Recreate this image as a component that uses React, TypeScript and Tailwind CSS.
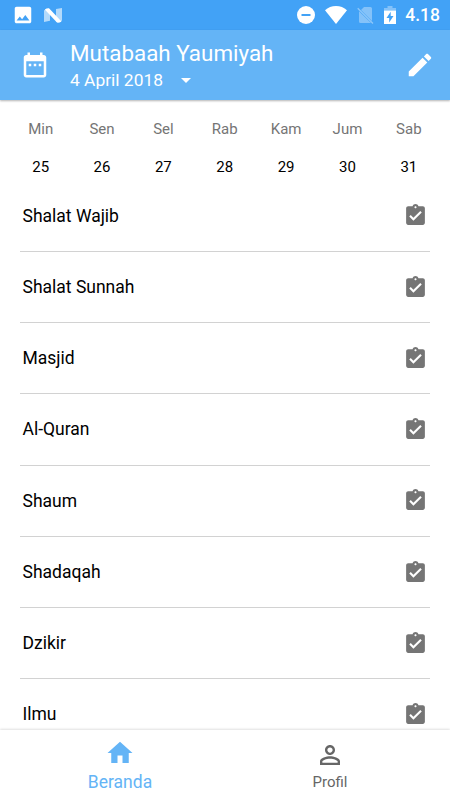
import React from 'react';

/* ─────────────────────────────────────────────
   Icon – 24-unit filled glyph
───────────────────────────────────────────── */
interface IconProps {
  d: string;
  className?: string;
}

const Icon: React.FC<IconProps> = ({ d, className = 'size-[30px]' }) => (
  <svg viewBox="0 0 24 24" fill="currentColor" className={`shrink-0 ${className}`}>
    <path d={d} />
  </svg>
);

const icons = {
  calendar:
    'M9 11H7v2h2v-2zm4 0h-2v2h2v-2zm4 0h-2v2h2v-2zm2-7h-1V2h-2v2H8V2H6v2H5c-1.11 0-1.99.9-1.99 2L3 20c0 1.1.89 2 2 2h14c1.1 0 2-.9 2-2V6c0-1.1-.9-2-2-2zm0 16H5V9h14v11z',
  pencil:
    'M3 17.25V21h3.75L17.81 9.94l-3.75-3.75L3 17.25zM20.71 7.04c.39-.39.39-1.02 0-1.41l-2.34-2.34c-.39-.39-1.02-.39-1.41 0l-1.83 1.83 3.75 3.75 1.83-1.83z',
  task:
    'M19 3h-4.18C14.4 1.84 13.3 1 12 1c-1.3 0-2.4.84-2.82 2H5c-1.1 0-2 .9-2 2v14c0 1.1.9 2 2 2h14c1.1 0 2-.9 2-2V5c0-1.1-.9-2-2-2zm-7 0c.55 0 1 .45 1 1s-.45 1-1 1-1-.45-1-1 .45-1 1-1zm-2 14l-4-4 1.41-1.41L10 14.17l6.59-6.59L18 9l-8 8z',
  home: 'M10 20v-6h4v6h5v-8h3L12 3 2 12h3v8z',
  person:
    'M12 5.9c1.16 0 2.1.94 2.1 2.1s-.94 2.1-2.1 2.1S9.9 9.16 9.9 8s.94-2.1 2.1-2.1m0 9c2.97 0 6.1 1.46 6.1 2.1v1.1H5.9V17c0-.64 3.13-2.1 6.1-2.1M12 4C9.79 4 8 5.79 8 8s1.79 4 4 4 4-1.79 4-4-1.79-4-4-4zm0 9c-2.67 0-8 1.34-8 4v3h16v-3c0-2.66-5.33-4-8-4z',
  image:
    'M21 19V5c0-1.1-.9-2-2-2H5c-1.1 0-2 .9-2 2v14c0 1.1.9 2 2 2h14c1.1 0 2-.9 2-2zM8.5 13.5l2.5 3.01L14.5 12l4.5 6H5l3.5-4.5z',
};

const days = [
  { name: 'Min', date: 25 },
  { name: 'Sen', date: 26 },
  { name: 'Sel', date: 27 },
  { name: 'Rab', date: 28 },
  { name: 'Kam', date: 29 },
  { name: 'Jum', date: 30 },
  { name: 'Sab', date: 31 },
];

const activities = [
  'Shalat Wajib',
  'Shalat Sunnah',
  'Masjid',
  'Al-Quran',
  'Shaum',
  'Shadaqah',
  'Dzikir',
  'Ilmu',
];

/* ─────────────────────────────────────────────
   Status bar
───────────────────────────────────────────── */
const StatusBar: React.FC = () => (
  <div className="flex h-[30px] shrink-0 items-center bg-[#42a2f6] pr-[10px] pl-[11.5px] text-white">
    <Icon d={icons.image} className="size-[22px]" />
    <svg viewBox="0 0 18 15" className="ml-[10px] h-[15px] w-[18px]">
      <path d="M0 2.2 6 1v11.8L0 14zM12 1l6-1v12.8L12 14z" fill="white" fillOpacity="0.6" />
      <path d="M.8 1.4Q3 0 5 .3L17.500 13.500Q15 15 13 14.600z" fill="white" />
    </svg>
    <div className="ml-auto flex items-center">
      <svg viewBox="0 0 18 18" className="mr-[10.5px] size-[18px]">
        <circle cx="9" cy="9" r="9" fill="white" />
        <path d="M4.5 8h9v2h-9z" fill="#42a2f6" />
      </svg>
      <svg viewBox="0 0 22 18" className="h-[18px] w-[22px]">
        <path d="M0 4.2C3 1.6 6.8 0 11 0s8 1.6 11 4.2L11 18z" fill="white" />
      </svg>
      <svg viewBox="0 0 17 18" className="ml-[10px] h-[18px] w-[17px]">
        <path d="M2 5.2 14 17H3.5Q2 17 2 15.500zM4 4 7 1h6.5q1.500 0 1.500 1.500V15z" fill="white" fillOpacity="0.35" />
        <path d="m.7 2.2 15.3 15.3" stroke="white" strokeOpacity="0.4" strokeWidth="1.3" />
      </svg>
      <svg viewBox="0 0 12 18" className="ml-[10px] h-[18px] w-[12px]">
        <path d="M3.5 0h5v2H12v2.500H0V2h3.5z" fill="white" fillOpacity="0.35" />
        <path d="M0 4.5h12V18H0zM6.7 5.8 2.5 12h2.7v4.5L9.5 10H6.7z" fill="white" fillRule="evenodd" />
      </svg>
      <span className="ml-[9px] pt-[2px] text-[17.5px] leading-none font-medium">4.18</span>
    </div>
  </div>
);

/* ─────────────────────────────────────────────
   App bar with title and date picker
───────────────────────────────────────────── */
const Header: React.FC = () => (
  <header className="z-10 flex h-[70px] shrink-0 items-center bg-[#64b4f6] pr-[15px] pl-5 text-white shadow-[0_1px_2px_rgba(0,0,0,0.3)]">
    <Icon d={icons.calendar} />
    <div className="ml-5 flex flex-col pt-[3px]">
      <h1 className="text-[22.4px] leading-[27px]">Mutabaah Yaumiyah</h1>
      <button className="flex items-center gap-[18px] text-[17.4px] leading-[26px]">
        4 April 2018
        <svg viewBox="0 0 10 5" className="h-[5px] w-[10px]">
          <path d="M0 0h10L5 5z" fill="white" />
        </svg>
      </button>
    </div>
    <button className="ml-auto" aria-label="Edit">
      <Icon d={icons.pencil} />
    </button>
  </header>
);

/* ─────────────────────────────────────────────
   Bottom navigation item
───────────────────────────────────────────── */
interface NavItemProps {
  d: string;
  label: string;
  active?: boolean;
}

const NavItem: React.FC<NavItemProps> = ({ d, label, active }) => (
  <button
    className={`flex w-[210px] flex-col items-center ${
      active ? 'pt-[7.5px] text-[17.5px] text-[#64b4f6]' : 'pt-[10px] text-[15px] text-[#666]'
    }`}
  >
    <Icon d={d} />
    <span className={active ? 'leading-[29px]' : 'leading-[25px]'}>{label}</span>
  </button>
);

const App: React.FC = () => {
  return (
    <div className="flex h-[800px] w-[450px] flex-col overflow-hidden bg-white font-['Roboto',sans-serif] text-black">
      <StatusBar />
      <Header />

      {/* Week strip */}
      <div className="grid h-[80.7px] shrink-0 grid-cols-7 pt-[17px] pr-[10.5px] pl-[10px] text-center text-[15px]">
        {days.map((day) => (
          <div key={day.name} className="flex flex-col gap-[14px]">
            <span className="leading-6 text-[#757575]">{day.name}</span>
            <span className="leading-6">{day.date}</span>
          </div>
        ))}
      </div>

      {/* Activities */}
      <ul className="min-h-0 flex-1 overflow-hidden px-5">
        {activities.map((name) => (
          <li
            key={name}
            className="flex h-[71.25px] items-center justify-between border-b border-[#d2d2d2] px-[2.5px]"
          >
            <span className="text-[17.5px]">{name}</span>
            <Icon d={icons.task} className="size-[25px] text-[#757575]" />
          </li>
        ))}
      </ul>

      {/* Bottom navigation */}
      <nav className="z-10 flex h-[70px] shrink-0 justify-center bg-white shadow-[0_-1px_2px_rgba(0,0,0,0.12)]">
        <NavItem d={icons.home} label="Beranda" active />
        <NavItem d={icons.person} label="Profil" />
      </nav>
    </div>
  );
};

export default App;
